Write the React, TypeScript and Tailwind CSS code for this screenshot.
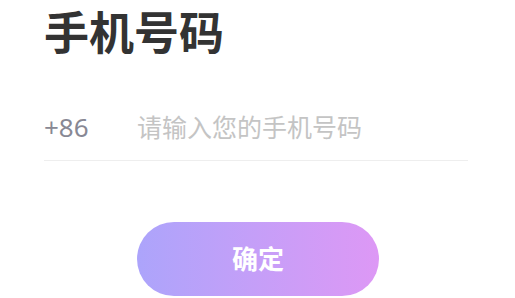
export default function App() {
  return (
    <div
      className="w-[515px] h-[298px] overflow-hidden bg-white pl-[44px] pr-[47px]"
      style={{ fontFamily: '"Noto Sans", "Noto Sans CJK SC", sans-serif' }}
    >
      <h1 className="pt-[10px] text-[45px] leading-[45px] font-bold text-[#333333]">
        手机号码
      </h1>

      <div className="mt-[59px] flex items-center border-b border-[#eeeeee] pb-[20px]">
        <span className="w-[93px] shrink-0 text-[26px] leading-[26px] text-[#888894]">+86</span>
        <input
          className="min-w-0 flex-1 text-[25px] leading-[26px] outline-none placeholder:text-[#c4c4c4]"
          placeholder="请输入您的手机号码"
        />
      </div>

      <div className="mt-[61px] flex justify-center pl-[4px]">
        <button className="h-[74px] w-[242px] rounded-full bg-gradient-to-r from-[#aca4fb] to-[#dd98f5] text-[26px] font-bold text-white">
          确定
        </button>
      </div>
    </div>
  );
}
